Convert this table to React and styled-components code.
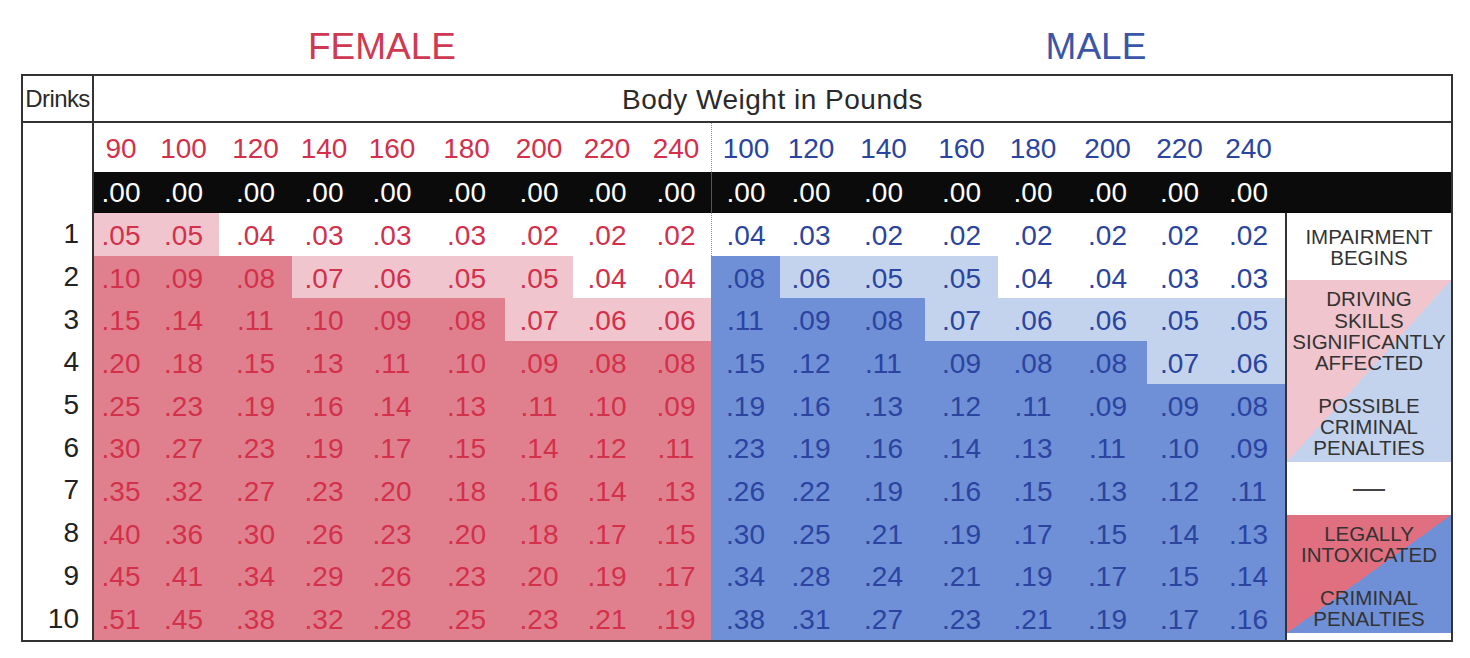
import React from "react";
import styled, { createGlobalStyle } from "styled-components";

const FEMALE_WEIGHTS = [90, 100, 120, 140, 160, 180, 200, 220, 240];
const MALE_WEIGHTS = [100, 120, 140, 160, 180, 200, 220, 240];

const FEMALE_COLS = [54, 71, 73, 64, 72, 77, 68, 68, 70];
const MALE_COLS = [69, 62, 83, 73, 70, 79, 65, 73];

const FEMALE = [
  [".05", ".05", ".04", ".03", ".03", ".03", ".02", ".02", ".02"],
  [".10", ".09", ".08", ".07", ".06", ".05", ".05", ".04", ".04"],
  [".15", ".14", ".11", ".10", ".09", ".08", ".07", ".06", ".06"],
  [".20", ".18", ".15", ".13", ".11", ".10", ".09", ".08", ".08"],
  [".25", ".23", ".19", ".16", ".14", ".13", ".11", ".10", ".09"],
  [".30", ".27", ".23", ".19", ".17", ".15", ".14", ".12", ".11"],
  [".35", ".32", ".27", ".23", ".20", ".18", ".16", ".14", ".13"],
  [".40", ".36", ".30", ".26", ".23", ".20", ".18", ".17", ".15"],
  [".45", ".41", ".34", ".29", ".26", ".23", ".20", ".19", ".17"],
  [".51", ".45", ".38", ".32", ".28", ".25", ".23", ".21", ".19"],
];

const MALE = [
  [".04", ".03", ".02", ".02", ".02", ".02", ".02", ".02"],
  [".08", ".06", ".05", ".05", ".04", ".04", ".03", ".03"],
  [".11", ".09", ".08", ".07", ".06", ".06", ".05", ".05"],
  [".15", ".12", ".11", ".09", ".08", ".08", ".07", ".06"],
  [".19", ".16", ".13", ".12", ".11", ".09", ".09", ".08"],
  [".23", ".19", ".16", ".14", ".13", ".11", ".10", ".09"],
  [".26", ".22", ".19", ".16", ".15", ".13", ".12", ".11"],
  [".30", ".25", ".21", ".19", ".17", ".15", ".14", ".13"],
  [".34", ".28", ".24", ".21", ".19", ".17", ".15", ".14"],
  [".38", ".31", ".27", ".23", ".21", ".19", ".17", ".16"],
];

const COLORS = {
  f: { text: "#d2304b", light: "#f0c5cd", dark: "#e0808e" },
  m: { text: "#2a44a0", light: "#c3d3ee", dark: "#6f8fd7" },
};

// .08 and up is dark, .05-.07 light, below that no shading
const tierOf = (v) => {
  const n = parseFloat(v);
  if (n >= 0.08) return "dark";
  if (n >= 0.05) return "light";
  return null;
};

const GlobalStyle = createGlobalStyle`
  body {
    margin: 0;
    background: #fff;
    font-family: "Liberation Sans", Arial, sans-serif;
  }
`;

const Page = styled.div`
  width: 1470px;
  height: 658px;
  padding-left: 21px;
  box-sizing: border-box;
`;

const TitleRow = styled.div`
  display: flex;
  height: 74px;
  padding-top: 28px;
  box-sizing: border-box;
`;

const Title = styled.div`
  width: ${(p) => p.$width}px;
  text-align: center;
  font-size: 37px;
  line-height: 37px;
  color: ${(p) => p.$color};
`;

const Table = styled.div`
  display: grid;
  width: 1432px;
  box-sizing: border-box;
  border: 2px solid #333;
  grid-template-columns: 71px ${FEMALE_COLS.map((w) => w + "px").join(" ")} ${MALE_COLS.map((w) => w + "px").join(" ")} 166px;
  grid-template-rows: 47px 49px 41px repeat(10, 42.7px);
`;

const HeadCell = styled.div`
  display: flex;
  align-items: center;
  justify-content: center;
  border-bottom: 2px solid #333;
  color: #2a2a2a;
  ${(p) => p.$drinks && "border-right: 2px solid #333; font-size: 24px; letter-spacing: -0.6px;"}
  ${(p) => p.$span && "grid-column: 2 / -1; font-size: 28px; letter-spacing: 0.5px; padding-top: 2px;"}
`;

const DrinkLabel = styled.div`
  display: flex;
  align-items: center;
  justify-content: flex-end;
  padding-right: 13px;
  border-right: 2px solid #333;
  font-size: 28px;
  color: #222;
  ${(p) => p.$rows && `grid-row: span ${p.$rows};`}
`;

const Weight = styled.div`
  display: flex;
  align-items: center;
  justify-content: center;
  padding-top: 3px;
  font-size: 28px;
  color: ${(p) => COLORS[p.$sex].text};
  ${(p) => p.$divider && "border-left: 1px dotted #8a8a8a;"}
`;

const Band = styled.div`
  display: flex;
  align-items: center;
  justify-content: center;
  background: #0b0b0b;
  color: #fff;
  font-size: 28px;
  ${(p) => p.$divider && "border-left: 1px solid #555;"}
`;

const Value = styled.div`
  display: flex;
  align-items: center;
  justify-content: center;
  padding-top: 3px;
  font-size: 28px;
  color: ${(p) => COLORS[p.$sex].text};
  background: ${(p) => (p.$tier ? COLORS[p.$sex][p.$tier] : "#fff")};
  ${(p) => p.$divider && !p.$tier && "border-left: 1px dotted #8a8a8a;"}
`;

const Legend = styled.div`
  grid-row: span 10;
  display: flex;
  flex-direction: column;
  border-left: 2px solid #333;
  color: #333;
  font-size: 20.5px;
  line-height: 21.3px;
  text-align: center;
`;

const LegendBlock = styled.div`
  height: ${(p) => p.$h}px;
  display: flex;
  flex-direction: column;
  justify-content: center;
  padding-top: ${(p) => p.$pt || 0}px;
  box-sizing: border-box;
  background: ${(p) =>
    p.$light
      ? `linear-gradient(to bottom right, ${COLORS.f.light} 50%, ${COLORS.m.light} 50%)`
      : p.$strong
      ? `linear-gradient(to bottom right, #e06f80 50%, ${COLORS.m.dark} 50%)`
      : "#fff"};
`;

const Gap = styled.div`
  height: 21.3px;
`;

const Dash = styled.div`
  font-size: 32px;
  line-height: 32px;
  color: #444;
  padding-bottom: 4px;
`;

export default function App() {
  return (
    <>
      <GlobalStyle />
      <Page>
        <TitleRow>
          <Title $width={722} $color="#cf3a52">FEMALE</Title>
          <Title $width={706} $color="#3b56a8">MALE</Title>
        </TitleRow>
        <Table>
          <HeadCell $drinks>Drinks</HeadCell>
          <HeadCell $span>Body Weight in Pounds</HeadCell>

          <DrinkLabel $rows={2} />
          {FEMALE_WEIGHTS.map((w) => (
            <Weight key={"fw" + w} $sex="f">{w}</Weight>
          ))}
          {MALE_WEIGHTS.map((w, i) => (
            <Weight key={"mw" + w} $sex="m" $divider={i === 0}>{w}</Weight>
          ))}
          <div />

          {FEMALE_WEIGHTS.map((w) => (
            <Band key={"fb" + w}>.00</Band>
          ))}
          {MALE_WEIGHTS.map((w, i) => (
            <Band key={"mb" + w} $divider={i === 0}>.00</Band>
          ))}
          <Band />

          {FEMALE.map((row, r) => (
            <React.Fragment key={"r" + r}>
              <DrinkLabel>{r + 1}</DrinkLabel>
              {row.map((v, c) => (
                <Value key={"f" + c} $sex="f" $tier={tierOf(v)}>{v}</Value>
              ))}
              {MALE[r].map((v, c) => (
                <Value key={"m" + c} $sex="m" $tier={tierOf(v)} $divider={c === 0}>{v}</Value>
              ))}
              {r === 0 && (
                <Legend>
                  <LegendBlock $h={67} $pt={1}>
                    <div>IMPAIRMENT</div>
                    <div>BEGINS</div>
                  </LegendBlock>
                  <LegendBlock $h={182} $pt={5} $light>
                    <div>DRIVING</div>
                    <div>SKILLS</div>
                    <div>SIGNIFICANTLY</div>
                    <div>AFFECTED</div>
                    <Gap />
                    <div>POSSIBLE</div>
                    <div>CRIMINAL</div>
                    <div>PENALTIES</div>
                  </LegendBlock>
                  <LegendBlock $h={53}>
                    <Dash>—</Dash>
                  </LegendBlock>
                  <LegendBlock $h={118} $pt={4} $strong>
                    <div>LEGALLY</div>
                    <div>INTOXICATED</div>
                    <Gap />
                    <div>CRIMINAL</div>
                    <div>PENALTIES</div>
                  </LegendBlock>
                </Legend>
              )}
            </React.Fragment>
          ))}
        </Table>
      </Page>
    </>
  );
}
